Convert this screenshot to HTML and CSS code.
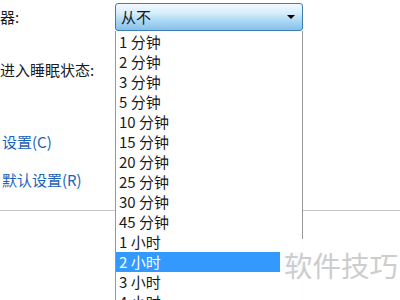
FILE: index.html
```html
<html lang="zh-CN">
<head>
    <meta charset="UTF-8">
    <title>电源选项</title>
    <link rel="stylesheet" href="styles.css">
</head>
<body>
    <div class="panel">
        <div class="panel__row panel__row--top">
            <p class="panel__label">器:</p>
            <div class="combo">
                <div class="combo__box">
                    <span>从不</span>
                    <span class="combo__arrow"></span>
                </div>
                <ul class="combo__list">
                    <li>1 分钟</li>
                    <li>2 分钟</li>
                    <li>3 分钟</li>
                    <li>5 分钟</li>
                    <li>10 分钟</li>
                    <li>15 分钟</li>
                    <li>20 分钟</li>
                    <li>25 分钟</li>
                    <li>30 分钟</li>
                    <li>45 分钟</li>
                    <li>1 小时</li>
                    <li class="is-selected">2 小时</li>
                    <li>3 小时</li>
                    <li>4 小时</li>
                </ul>
            </div>
        </div>

        <p class="panel__label panel__label--sleep">进入睡眠状态:</p>

        <a class="panel__link panel__link--first" href="#">设置(C)</a>
        <a class="panel__link" href="#">默认设置(R)</a>

        <div class="panel__rule"></div>
    </div>

    <div class="mark">软件技巧</div>
</body>
</html>
```

FILE: styles.css
```css
html, body {
    margin: 0;
    padding: 0;
    background-color: #ffffff;
    overflow: hidden;
    font-family: "Noto Sans CJK SC", "DejaVu Sans", sans-serif;
    font-size: 15px;
    color: #1a1a1a;
}

.panel {
    display: flex;
    flex-direction: column;
    width: 400px;
    height: 300px;
}

.panel__row {
    display: flex;
    align-items: center;
}

.panel__row--top {
    padding-top: 3px;
}

.panel__label {
    margin: 0;
    width: 115px;
    line-height: 20px;
}

.panel__label--sleep {
    margin-top: 29px;
}

.panel__link {
    line-height: 20px;
    color: #1b63b8;
    text-decoration: none;
    margin-left: 2px;
}

.panel__link--first {
    margin-top: 52px;
    margin-bottom: 18px;
}

.panel__rule {
    margin-top: 20px;
    height: 1px;
    background-color: #c4c4c4;
}

.combo {
    position: relative;
    width: 188px;
}

.combo__box {
    box-sizing: border-box;
    height: 28px;
    display: flex;
    align-items: center;
    justify-content: space-between;
    padding: 0 7px 0 5px;
    border: 1px solid #3c7fb1;
    border-radius: 3px;
    background: linear-gradient(#f2f9fe, #d6eefc 35%, #b6dff8 55%, #86c0ea);
    line-height: 20px;
}

.combo__arrow {
    width: 0;
    height: 0;
    border-left: 4px solid transparent;
    border-right: 4px solid transparent;
    border-top: 4px solid #000000;
}

.combo__list {
    position: absolute;
    top: 28px;
    left: 0;
    z-index: 2;
    box-sizing: border-box;
    width: 188px;
    margin: 0;
    padding: 1px 0 0 0;
    list-style: none;
    background-color: #ffffff;
    border-left: 1px solid #979797;
    border-right: 1px solid #979797;
}

.combo__list > li {
    height: 20px;
    line-height: 20px;
    padding-left: 3px;
    white-space: nowrap;
}

.combo__list > li.is-selected {
    background-color: #3399ff;
    color: #ffffff;
}

.mark {
    position: absolute;
    left: 280px;
    top: 239px;
    z-index: 3;
    width: 120px;
    height: 61px;
    padding: 8px 0 0 4px;
    box-sizing: border-box;
    background-color: rgba(255, 255, 255, 0.97);
    font-size: 28.5px;
    line-height: 36px;
    color: #cdcdcd;
}
```
